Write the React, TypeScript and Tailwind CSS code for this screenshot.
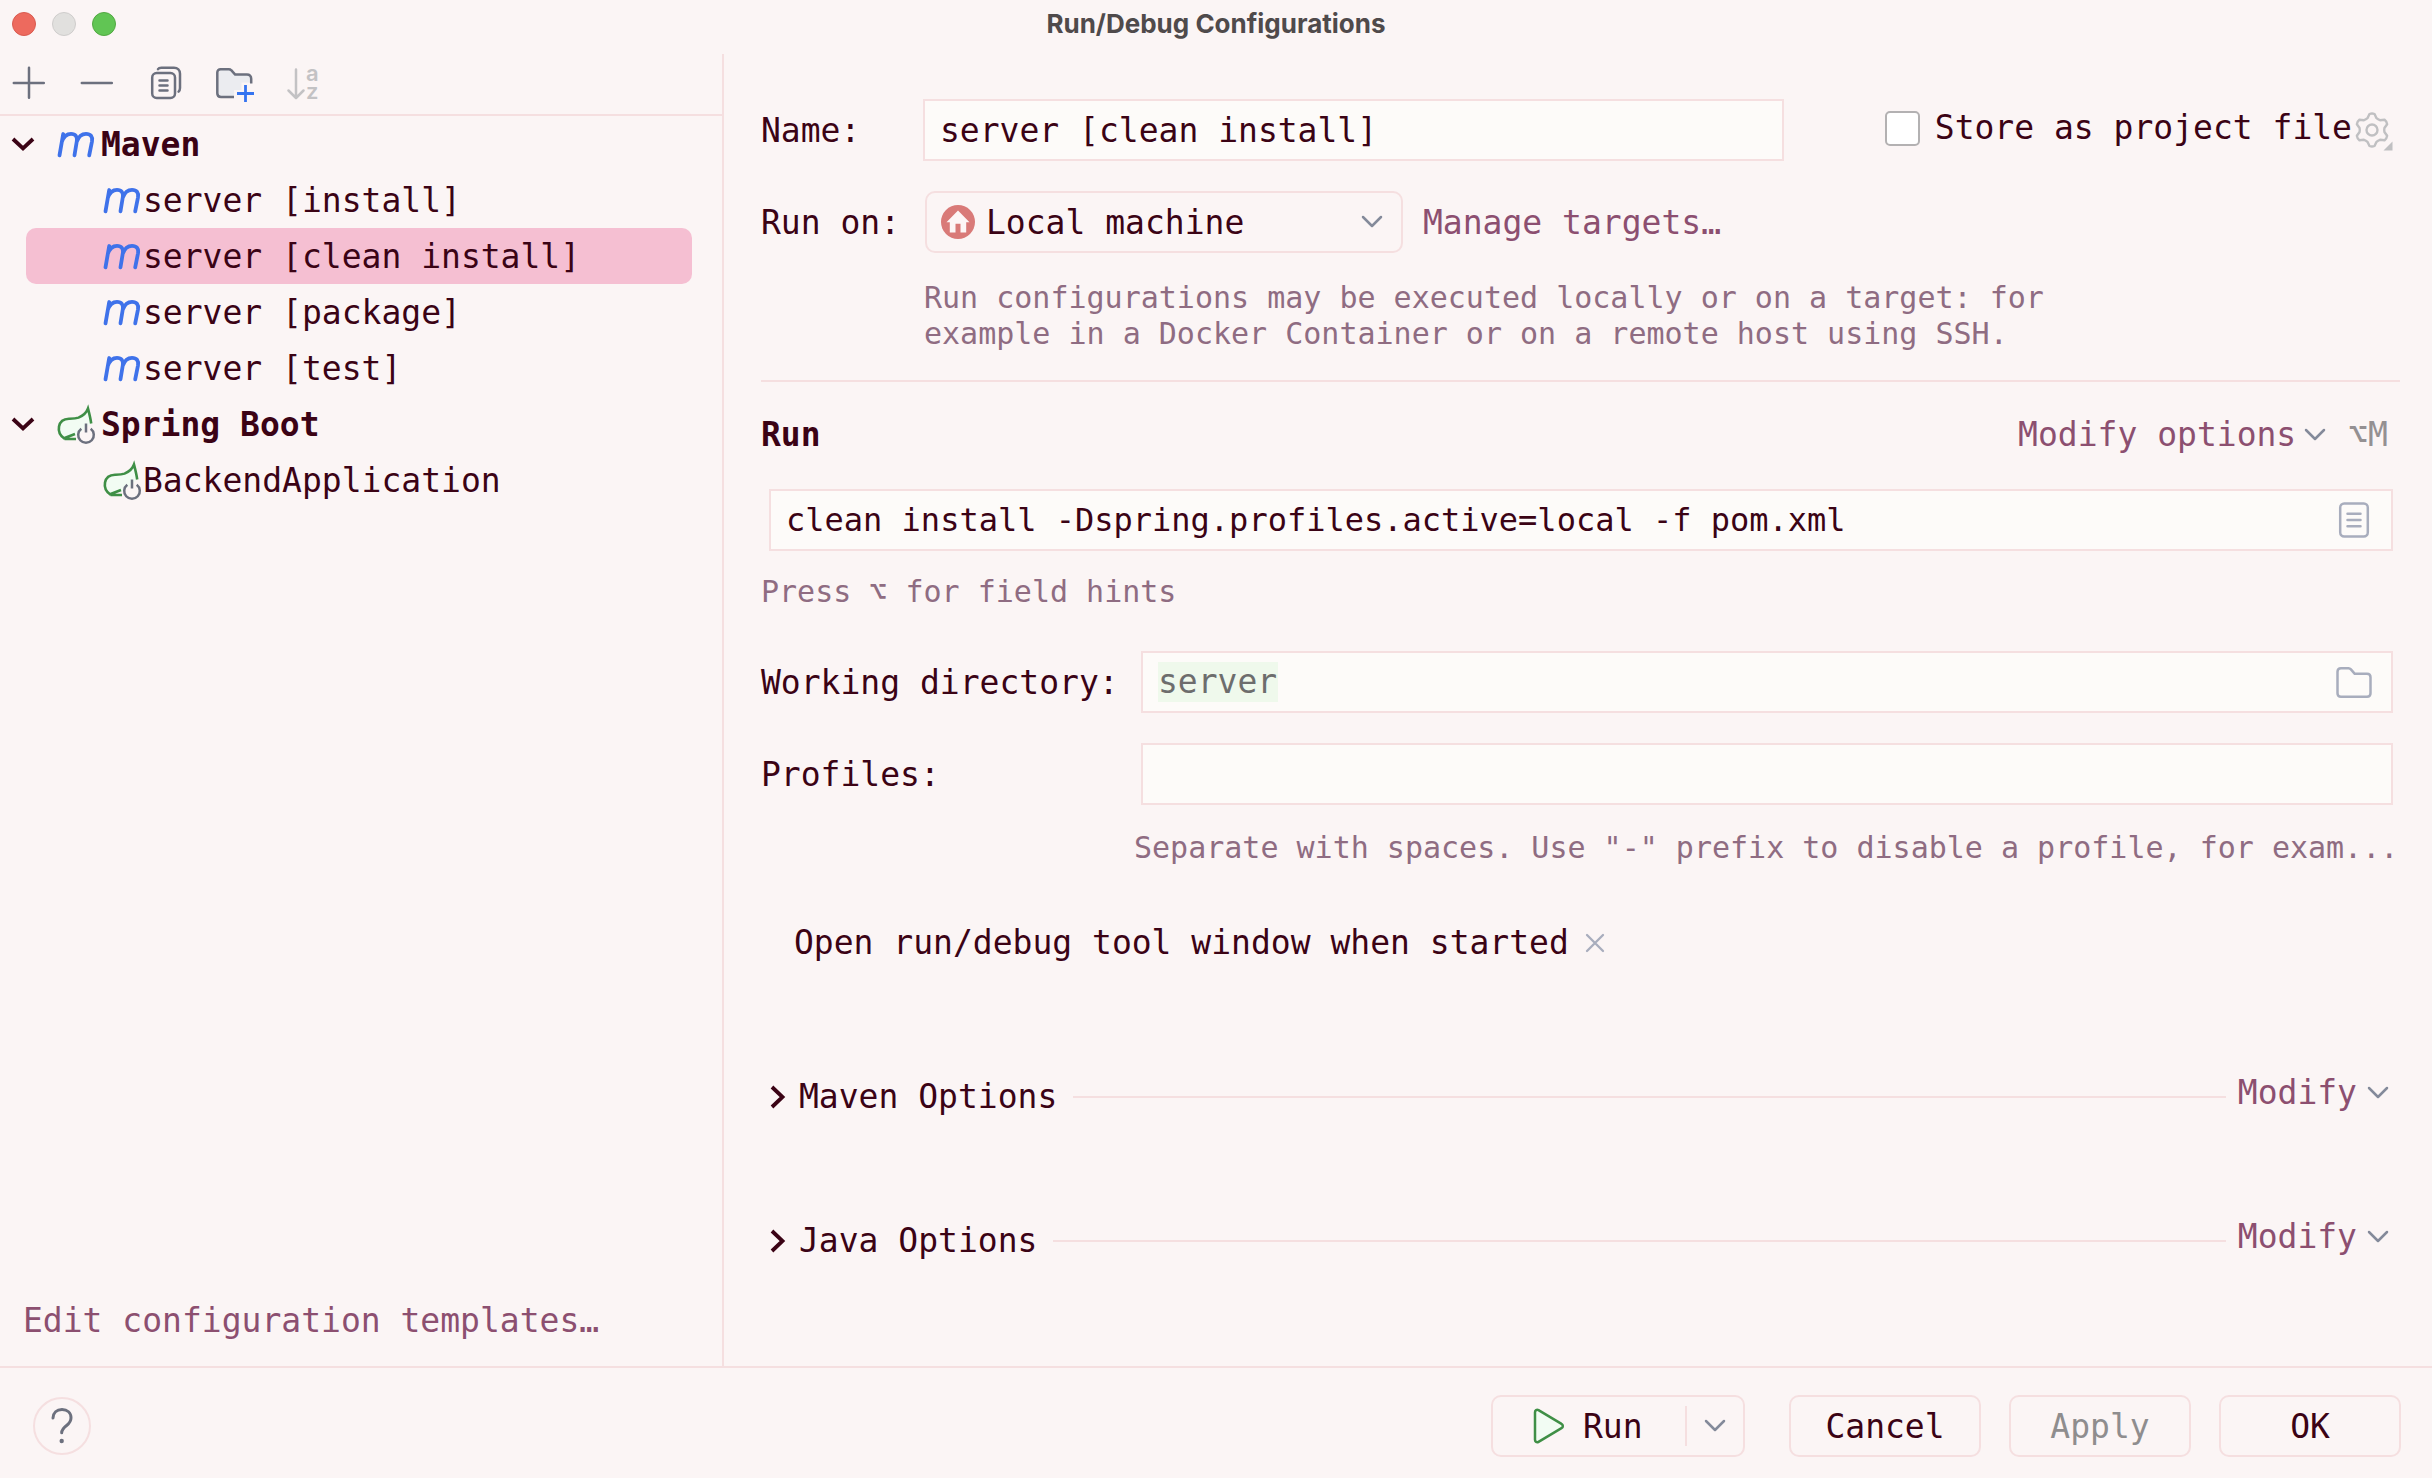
import React from "react";

const MONO = "font-['DejaVu_Sans_Mono',monospace]";

type IconProps = { className?: string };

function ChevronDown({ className = "" }: IconProps) {
  return (
    <svg className={className} width="22" height="14" viewBox="0 0 22 14" fill="none" stroke="currentColor" strokeLinecap="round" strokeLinejoin="round" aria-hidden="true">
      <path d="M2 2l9 9 9-9" strokeWidth="2.5" />
    </svg>
  );
}

function TreeChevron({ className = "" }: IconProps) {
  return (
    <svg className={className} width="24" height="16" viewBox="0 0 24 16" fill="none" stroke="#3b0315" aria-hidden="true">
      <path d="M2 3l10 9.5L22 3" strokeWidth="3.8" />
    </svg>
  );
}

function RightChevron() {
  return (
    <svg width="16" height="24" viewBox="0 0 16 24" fill="none" stroke="#3b0315" aria-hidden="true">
      <path d="M2 2l10.500 10L2 22" strokeWidth="3.8" />
    </svg>
  );
}

function AddIcon() {
  return (
    <svg width="40" height="40" viewBox="0 0 40 40" stroke="#6c707e" strokeWidth="2.500" strokeLinecap="round" aria-hidden="true">
      <path d="M20 4.800v30M4.800 20h30" />
    </svg>
  );
}

function RemoveIcon() {
  return (
    <svg width="40" height="40" viewBox="0 0 40 40" stroke="#6c707e" strokeWidth="2.500" strokeLinecap="round" aria-hidden="true">
      <path d="M4.800 20h30" />
    </svg>
  );
}

function CopyIcon() {
  return (
    <svg width="40" height="40" viewBox="0 0 40 40" fill="none" stroke="#6c707e" strokeWidth="2.500" strokeLinecap="round" aria-hidden="true">
      <rect x="7.200" y="10" width="22.800" height="25" rx="4.500" />
      <path d="M14.500 17.500h8M14.500 22.500h8M14.500 27.500h8" />
      <path d="M13 6.200c.8-1.300 2.200-1.400 3.400-1.400H29c3.600 0 6 2.400 6 6V25c0 1.600-.5 2.800-1.400 3.600" />
    </svg>
  );
}

function FolderAddIcon() {
  return (
    <svg width="42" height="42" viewBox="-1 0 42 42" fill="none" strokeLinecap="butt" strokeLinejoin="round" aria-hidden="true">
      <path d="M3.300 10.500c0-2 1.300-3.300 3.300-3.300h8.200c1 0 1.800.3 2.400 1l4 4.400H33c2.600 0 4.200 1.600 4.200 4.200v3.700H27.500v7.500H20v7.800H7c-2.300 0-3.700-1.400-3.700-3.700z" fill="#ebecf0" />
      <path d="M37.200 21.500v-4.700c0-2.600-1.600-4.200-4.200-4.200H21.200l-4-4.400c-.6-.7-1.400-1-2.400-1H6.600c-2 0-3.300 1.300-3.300 3.300v20.800c0 2.300 1.400 3.700 3.700 3.700h13" stroke="#6c707e" strokeWidth="2.500" />
      <path d="M31.500 23v17M23 31.500h17" stroke="#3574f0" strokeWidth="2.800" />
    </svg>
  );
}

function SortIcon() {
  return (
    <svg className="overflow-visible" width="40" height="40" viewBox="0 0 40 40" fill="none" stroke="#c3c2c4" strokeWidth="2.500" strokeLinecap="round" strokeLinejoin="round" aria-hidden="true">
      <path d="M13 6.500v28M5.500 27.500L13 35l7.500-7.500" />
      <text x="23" y="18" fontSize="22" fontFamily="Inter" fontWeight="600" fill="#c3c2c4" stroke="none">a</text>
      <text x="23" y="36" fontSize="22" fontFamily="Inter" fontWeight="600" fill="#c3c2c4" stroke="none">z</text>
    </svg>
  );
}

function MavenIcon() {
  return (
    <svg className="shrink-0" width="40" height="40" viewBox="0 0 40 40" fill="none" stroke="#3f72ea" strokeWidth="3.800" strokeLinecap="round" strokeLinejoin="round" aria-hidden="true">
      <path d="M3.500 31.300L7.200 10M5.800 18C7.500 13 11 9.800 15 9.800c4.500 0 6.600 2.800 5.800 7.500L18.500 31.300M20.800 17.500C22.500 12.800 26 9.800 30 9.800c4.600 0 6.800 2.800 6 7.500L33.200 31.300" />
    </svg>
  );
}

function SpringIcon() {
  return (
    <svg className="shrink-0" width="40" height="42" viewBox="0 0 40 42" fill="none" aria-hidden="true">
      <path d="M7.500 35.500C3.500 32 2.300 27.500 3 23.500 4 18.500 7.500 16 13 15.800c3.500-.1 6.500-.1 9.500-1.200C27.500 12.600 30.500 9.500 32 5.500c1 5 2.500 9.500 3 15l-14 12z" fill="#f2fcf3" />
      <path d="M20 36H8.500M19 31l-11 4.300C3.500 32 2.300 27.500 3 23.500 4 18.500 7.500 16 13 15.800c3.500-.1 6.500-.1 9.500-1.200C27.500 12.600 30.500 9.500 32 5.500c1.300 5 2.500 9.500 3.200 15" stroke="#3f8f46" strokeWidth="2.600" />
      <path d="M25.300 25.800a7.800 7.800 0 1 0 9.400 0" stroke="#6c707e" strokeWidth="2.500" />
      <path d="M30 20.500v9" stroke="#6c707e" strokeWidth="2.500" />
    </svg>
  );
}

function HomeIcon() {
  return (
    <svg className="shrink-0" width="34" height="34" viewBox="0 0 34 34" aria-hidden="true">
      <circle cx="17" cy="17" r="17" fill="#d97a78" />
      <path d="M17 5.500L5.500 17.200H8.800V27.500h5.700v-8.700h5V27.500h5.700V17.200h3.300z" fill="#fdf6f6" />
    </svg>
  );
}

function GearIcon() {
  const points = 6;
  let d = "";
  for (let i = 0; i < points; i++) {
    const a = (i * 60 - 90) * (Math.PI / 180);
    const at = (r: number, off: number) => {
      const t = a + (off * Math.PI) / 180;
      return `${(20 + r * Math.cos(t)).toFixed(2)} ${(20 + r * Math.sin(t)).toFixed(2)}`;
    };
    d += `${i === 0 ? "M" : "L"}${at(12.6, -21)} L${at(16.2, -9)} Q${at(17, 0)} ${at(16.2, 9)} L${at(12.6, 21)} Q${at(12, 30)} ${at(12.6, 39)} `;
  }
  return (
    <svg width="42" height="42" viewBox="0 0 42 42" fill="none" stroke="#c0c0c2" strokeWidth="2.400" strokeLinejoin="round" aria-hidden="true">
      <path d={d + "Z"} />
      <circle cx="20" cy="20" r="5.500" />
      <path d="M40.500 31.500v9h-9z" fill="#c0c0c2" stroke="none" />
    </svg>
  );
}

function ListIcon() {
  return (
    <svg width="40" height="40" viewBox="0 0 40 40" fill="none" stroke="#a8adbd" strokeWidth="2.500" strokeLinecap="round" aria-hidden="true">
      <rect x="6.200" y="3.500" width="27.600" height="33" rx="4" />
      <path d="M13.500 13.800h13M13.500 20h13M13.500 26.200h13" />
    </svg>
  );
}

function FolderIcon() {
  return (
    <svg width="40" height="40" viewBox="0 0 40 40" fill="none" stroke="#a8adbd" strokeWidth="2.500" strokeLinejoin="round" aria-hidden="true">
      <path d="M3.500 9.800c0-2.200 1.300-3.500 3.500-3.500h7.500c1 0 1.800.4 2.400 1.100l3.900 4.400H33c2.200 0 3.500 1.300 3.500 3.500v15.900c0 2.200-1.300 3.500-3.500 3.500H7c-2.200 0-3.500-1.300-3.500-3.500z" />
    </svg>
  );
}

function CloseIcon() {
  return (
    <svg width="20" height="20" viewBox="0 0 20 20" stroke="#a8adbd" strokeWidth="2.300" strokeLinecap="round" aria-hidden="true">
      <path d="M2 2l16 16M18 2L2 18" />
    </svg>
  );
}

function PlayIcon() {
  return (
    <svg width="32" height="36" viewBox="0 0 32 36" aria-hidden="true">
      <path d="M2 4.300C2 2.200 3.800 1.200 5.500 2.200L28.500 15.800c1.800 1 1.800 3.400 0 4.400L5.500 33.800C3.800 34.800 2 33.800 2 31.700z" fill="#f2fcf3" stroke="#3f8f46" strokeWidth="2.500" />
    </svg>
  );
}

function HelpIcon() {
  return (
    <svg width="24" height="38" viewBox="0 0 24 38" fill="none" stroke="#6c707e" strokeWidth="3" strokeLinecap="round" aria-hidden="true">
      <path d="M3 11c.2-5.300 3.700-8.500 9-8.500s9 3.300 9 8.300c0 3.400-1.700 5.600-4.400 7.700-3 2.300-4.900 4-4.900 7.300" />
      <circle cx="11.700" cy="34" r="2.200" fill="#6c707e" stroke="none" />
    </svg>
  );
}

type RowProps = { icon: "maven" | "spring"; label: string; selected?: boolean };

function GroupRow({ icon, label }: RowProps) {
  return (
    <button type="button" aria-expanded="true" className="flex h-14 w-full items-center pl-[11px] text-left font-bold">
      <TreeChevron className="mr-[21px] shrink-0" />
      {icon === "maven" ? <MavenIcon /> : <SpringIcon />}
      <span className="pl-[5px] pt-px">{label}</span>
    </button>
  );
}

function ItemRow({ icon, label, selected }: RowProps) {
  return (
    <button
      type="button"
      aria-current={selected ? "true" : undefined}
      className={`ml-[26px] mr-[30px] flex h-14 items-center self-stretch rounded-[10px] pl-[76px] text-left ${selected ? "bg-[#f5bfd2]" : ""}`}
    >
      {icon === "maven" ? <MavenIcon /> : <SpringIcon />}
      <span className="pl-px pt-px">{label}</span>
    </button>
  );
}

function OptionSection({ label }: { label: string }) {
  return (
    <section className="flex h-12 items-center pr-[11px]">
      <button type="button" aria-expanded="false" className="ml-[9px] flex items-center gap-[13px]">
        <RightChevron />
        {label}
      </button>
      <div className="ml-4 mr-3 h-[2px] flex-1 bg-[#f5dfe0]" />
      <button type="button" className="flex items-center gap-[10px] pb-2 text-[#8c4f70]">
        Modify
        <ChevronDown className="text-[#848a9a]" />
      </button>
    </section>
  );
}

const FIELD = "h-[62px] border-2 border-[#f5dfe0] bg-[#fdfbf9]";
const BUTTON = "h-[62px] rounded-[10px] border-2 border-[#f5dfe0]";

export default function App() {
  return (
    <div className={`flex min-h-screen flex-col bg-[#fbf5f5] text-[33px] leading-10 text-[#3b0315] ${MONO}`}>
      <header className="relative mb-1.5 flex h-12 items-center justify-center">
        <div className="absolute left-3 flex gap-4">
          <button type="button" aria-label="Close" className="size-6 rounded-full border border-[#d95b50] bg-[#ed6a5e]" />
          <button type="button" aria-label="Minimize" disabled className="size-6 rounded-full border border-[#cfcdcc] bg-[#e1e0de]" />
          <button type="button" aria-label="Zoom" className="size-6 rounded-full border border-[#52a842] bg-[#61c554]" />
        </div>
        <h1 className="pb-px font-['Inter',sans-serif] text-[26px] font-bold text-[#4f4a4b]">Run/Debug Configurations</h1>
      </header>

      <div className="flex flex-1">
        <aside className="flex w-[724px] shrink-0 flex-col border-r-2 border-[#f5dfe0]">
          <div className="flex h-[62px] items-center gap-7 border-b-2 border-[#f5dfe0] pb-0.5 pl-[9px]" role="toolbar">
            <button type="button" aria-label="Add"><AddIcon /></button>
            <button type="button" aria-label="Remove"><RemoveIcon /></button>
            <button type="button" aria-label="Copy"><CopyIcon /></button>
            <button type="button" aria-label="New folder"><FolderAddIcon /></button>
            <button type="button" aria-label="Sort" disabled><SortIcon /></button>
          </div>
          <nav className="flex flex-1 flex-col">
            <GroupRow icon="maven" label="Maven" />
            <ItemRow icon="maven" label="server [install]" />
            <ItemRow icon="maven" label="server [clean install]" selected />
            <ItemRow icon="maven" label="server [package]" />
            <ItemRow icon="maven" label="server [test]" />
            <GroupRow icon="spring" label="Spring Boot" />
            <ItemRow icon="spring" label="BackendApplication" />
          </nav>
          <a href="#templates" className="mb-[25px] ml-[23px] self-start text-[#8c4f70]">Edit configuration templates…</a>
        </aside>

        <main className="flex min-w-0 flex-1 flex-col pl-[37px] pr-8 pt-[45px]">
          <div className="flex items-center">
            <label htmlFor="name" className="w-[162px] shrink-0 pt-px">Name:</label>
            <input id="name" defaultValue="server [clean install]" className={`${FIELD} min-w-0 flex-1 px-[15px] pt-px`} />
            <label className="ml-[101px] flex items-center gap-[15px] whitespace-nowrap pb-1">
              <input type="checkbox" className="size-[35px] appearance-none rounded-[5px] border-2 border-[#b3b1b2] bg-white" />
              Store as project file
            </label>
            <button type="button" aria-label="Store options" className="mr-[6px] pt-0.5"><GearIcon /></button>
          </div>

          <div className="mt-[30px] flex items-center">
            <label htmlFor="target" className="w-[164px] shrink-0 pt-px">Run on:</label>
            <div className={`${BUTTON} flex w-[478px] items-center pl-[14px] pr-[18px]`}>
              <HomeIcon />
              <select id="target" className="h-full flex-1 appearance-none pl-[11px] pt-px outline-none">
                <option>Local machine</option>
              </select>
              <ChevronDown className="text-[#848a9a]" />
            </div>
            <a href="#targets" className="ml-5 pt-px text-[#8c4f70]">Manage targets…</a>
          </div>
          <p className="ml-[163px] mt-[27px] w-[1140px] text-[30px] leading-9 text-[#8f6c82]">
            Run configurations may be executed locally or on a target: for example in a Docker Container or on a remote host using SSH.
          </p>

          <hr className="mt-7 border-t-2 border-[#f5dfe0]" />

          <div className="mt-[33px] flex items-center pr-3">
            <h2 className="flex-1 font-bold">Run</h2>
            <button type="button" className="flex items-center gap-2 text-[#8c4f70]">
              Modify options
              <ChevronDown className="text-[#848a9a]" />
            </button>
            <kbd className={`ml-[22px] ${MONO} text-[#949092]`}>⌥M</kbd>
          </div>

          <div className={`${FIELD} ml-2 mr-[7px] mt-[34px] flex items-center pl-[15px] pr-[17px]`}>
            <input aria-label="Command line" defaultValue="clean install -Dspring.profiles.active=local -f pom.xml" className="min-w-0 flex-1 text-[32px] outline-none" />
            <button type="button" aria-label="Insert macros"><ListIcon /></button>
          </div>
          <p className="mt-[21px] text-[30px] text-[#8f6c82]">Press ⌥ for field hints</p>

          <div className="mt-[39px] flex items-center pr-[7px]">
            <label htmlFor="workdir" className="w-[380px] shrink-0 pt-px">Working directory:</label>
            <div className={`${FIELD} flex flex-1 items-center justify-between pl-[15px] pr-[17px]`}>
              <input id="workdir" defaultValue="server" className="w-[120px] bg-[#eff9ec] text-[#6d6d6d] outline-none" />
              <button type="button" aria-label="Browse"><FolderIcon /></button>
            </div>
          </div>
          <div className="mt-[30px] flex items-center pr-[7px]">
            <label htmlFor="profiles" className="w-[380px] shrink-0 pt-px">Profiles:</label>
            <input id="profiles" className={`${FIELD} min-w-0 flex-1 px-[15px]`} />
          </div>
          <p className="ml-[373px] mt-[23px] whitespace-nowrap text-[30px] text-[#8f6c82]">
            Separate with spaces. Use "-" prefix to disable a profile, for exam...
          </p>

          <div className="ml-[33px] mt-[55px] flex items-center gap-4">
            <span>Open run/debug tool window when started</span>
            <button type="button" aria-label="Remove option"><CloseIcon /></button>
          </div>

          <div className="mt-[110px] flex flex-col gap-24">
            <OptionSection label="Maven Options" />
            <OptionSection label="Java Options" />
          </div>
        </main>
      </div>

      <footer className="flex h-[112px] items-center border-t-2 border-[#f5dfe0] pl-[33px] pr-[31px] pt-1.5">
        <button type="button" aria-label="Help" className="flex size-[58px] items-center justify-center rounded-full border-2 border-[#f5dfe0]">
          <HelpIcon />
        </button>
        <div className={`${BUTTON} ml-auto flex w-[254px] items-center`}>
          <button type="button" className="flex flex-1 items-center gap-[18px] pl-10">
            <PlayIcon />
            <span className="pt-px">Run</span>
          </button>
          <button type="button" aria-label="More run actions" className="flex h-10 w-[58px] items-center justify-center border-l-2 border-[#f5dfe0] text-[#848a9a]">
            <ChevronDown />
          </button>
        </div>
        <button type="button" className={`${BUTTON} ml-11 w-[192px] pt-px`}>Cancel</button>
        <button type="button" disabled className={`${BUTTON} ml-7 w-[182px] pt-px text-[#8f8d8e]`}>Apply</button>
        <button type="button" className={`${BUTTON} ml-7 w-[182px] pt-px`}>OK</button>
      </footer>
    </div>
  );
}
